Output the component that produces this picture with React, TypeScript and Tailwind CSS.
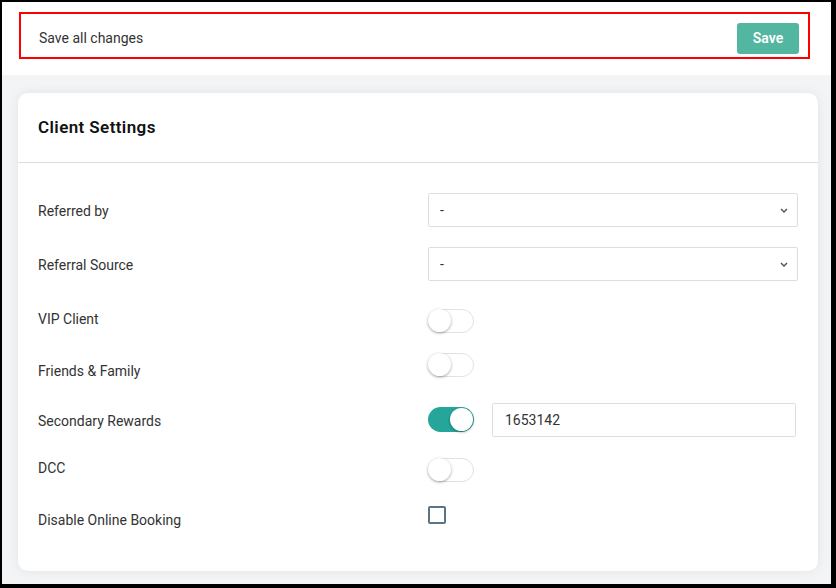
import React from "react";

function Toggle({ on = false }: { on?: boolean }) {
  return on ? (
    <div className="relative h-[25px] w-[46px] rounded-full bg-[#26a69a]">
      <div className="absolute right-[1px] top-[1px] h-[23px] w-[23px] rounded-full bg-white shadow-[0_1px_3px_rgba(0,0,0,0.35)]" />
    </div>
  ) : (
    <div className="relative h-[24px] w-[46px] rounded-full border border-[#e2e2e2] bg-white">
      <div className="absolute left-[-1px] top-[-1px] h-[23px] w-[23px] rounded-full bg-white shadow-[0_1px_3px_rgba(0,0,0,0.35)]" />
    </div>
  );
}

function Select() {
  return (
    <div className="flex h-[34px] w-[370px] items-center justify-between rounded-[2px] border border-[#dedede] bg-white pl-[11px] pr-[8px] text-[14px] text-[#333]">
      <span>-</span>
      <svg width="8" height="5" viewBox="0 0 8 5" className="mr-[1px]">
        <path d="M1 1 L4 4 L7 1" fill="none" stroke="#5a5a5a" strokeWidth="1.5" />
      </svg>
    </div>
  );
}

export default function App() {
  return (
    <div
      className="h-[588px] w-[836px] bg-black pl-[2px] pt-[2px] pr-[5px] pb-[4px]"
      style={{ fontFamily: "Roboto, 'Liberation Sans', sans-serif" }}
    >
      <div className="flex h-full flex-col bg-[#f3f4f6]">
        <div className="relative flex h-[73px] items-center justify-between bg-white pl-[37px] pr-[32px]">
          <span className="text-[14px] text-[#333]">Save all changes</span>
          <button className="h-[31px] w-[62px] rounded-[3px] bg-[#53b6a0] text-[14px] font-semibold text-white">
            Save
          </button>
          <div className="pointer-events-none absolute left-[17px] top-[10px] h-[47px] w-[791px] border-2 border-[#ff0000]" />
        </div>

        <div className="ml-[16px] mt-[18px] w-[800px] rounded-[10px] bg-white shadow-[0_0_12px_rgba(0,0,0,0.07)]">
          <div className="flex h-[70px] items-center border-b border-[#dcdcdc] pl-[20px] pt-[1px]">
            <h2 className="text-[17px] font-semibold tracking-[0.4px] text-[#111]">Client Settings</h2>
          </div>

          <div className="px-[20px] pt-[30px] pb-[20px] text-[14px] text-[#333]">
            <div className="flex h-[54px] items-start">
              <div className="mt-[8px] w-[390px] leading-5">Referred by</div>
              <Select />
            </div>
            <div className="flex h-[54px] items-start">
              <div className="mt-[8px] w-[390px] leading-5">Referral Source</div>
              <Select />
            </div>
            <div className="flex h-[52px] items-start">
              <div className="mt-[8px] w-[390px] leading-5">VIP Client</div>
              <div className="mt-[8px]">
                <Toggle />
              </div>
            </div>
            <div className="flex h-[50px] items-start">
              <div className="mt-[8px] w-[390px] leading-5">Friends &amp; Family</div>
              <div className="mt-0">
                <Toggle />
              </div>
            </div>
            <div className="flex h-[53px] items-start">
              <div className="mt-[8px] w-[390px] leading-5">Secondary Rewards</div>
              <div className="mt-[4px]">
                <Toggle on />
              </div>
              <div className="ml-[18px] flex h-[34px] w-[304px] items-center rounded-[2px] border border-[#dedede] pl-[12px] text-[14px] text-[#333]">
                1653142
              </div>
            </div>
            <div className="flex h-[50px] items-start">
              <div className="mt-[2px] w-[390px] leading-5">DCC</div>
              <div className="mt-[2px]">
                <Toggle />
              </div>
            </div>
            <div className="flex h-[45px] items-start">
              <div className="mt-[4px] w-[390px] leading-5">Disable Online Booking</div>
              <div className="h-[18px] w-[18px] rounded-[2px] border-2 border-[#5b7583]" />
            </div>
          </div>
        </div>
      </div>
    </div>
  );
}
